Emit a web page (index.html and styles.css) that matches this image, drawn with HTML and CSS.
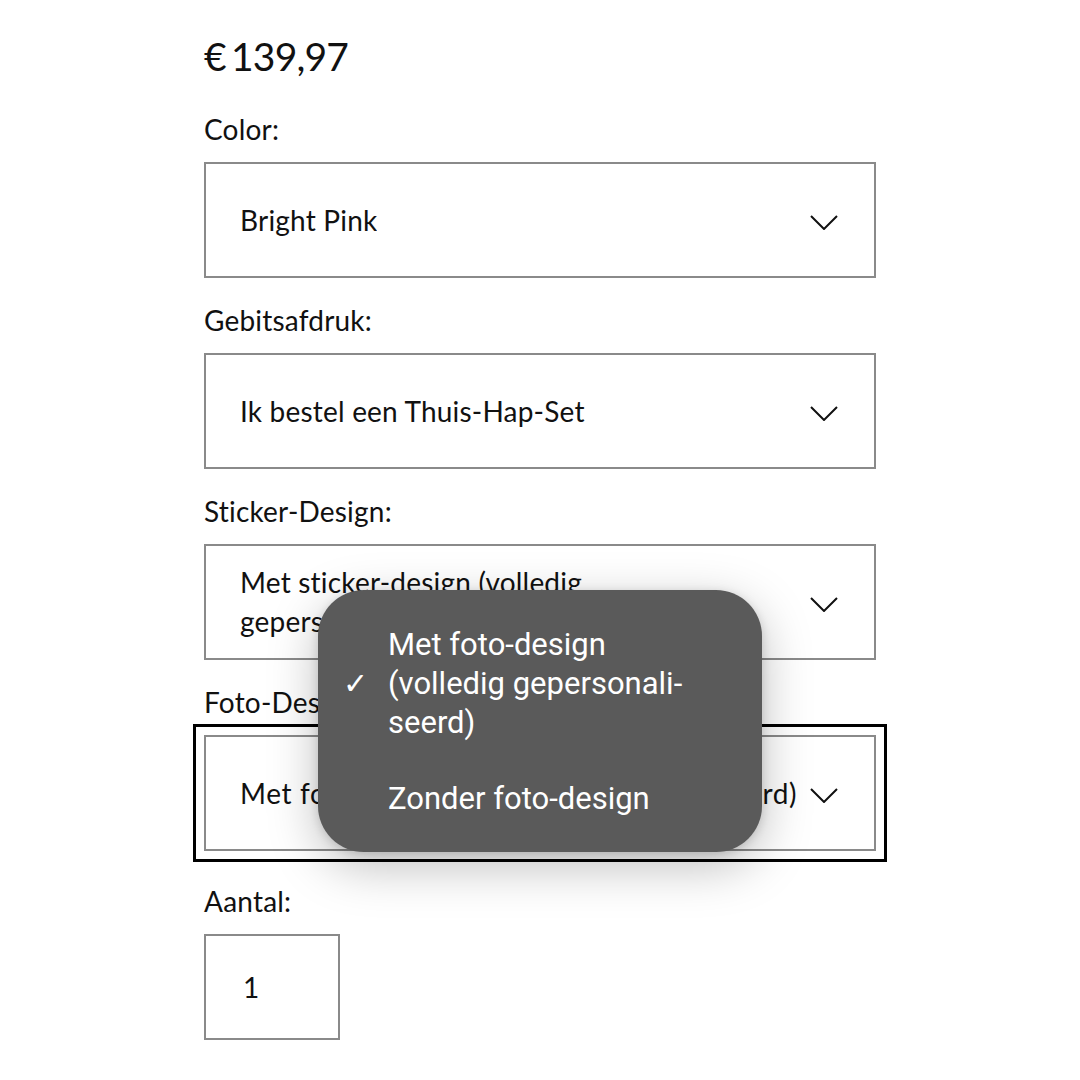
FILE: index.html
```
<!DOCTYPE html>
<html lang="nl">
<head>
<meta charset="utf-8">
<link rel="stylesheet" href="styles.css">
</head>
<body>
<main class="page">
  <div class="price">€ 139,97</div>

  <div class="field">
    <div class="label">Color:</div>
    <div class="select">
      <span class="value">Bright Pink</span>
      <svg class="chev" width="28" height="16" viewBox="0 0 28 16"><polyline points="1,2 14,15 27,2" fill="none" stroke="#111" stroke-width="2"/></svg>
    </div>
  </div>

  <div class="field">
    <div class="label">Gebitsafdruk:</div>
    <div class="select">
      <span class="value">Ik bestel een Thuis-Hap-Set</span>
      <svg class="chev" width="28" height="16" viewBox="0 0 28 16"><polyline points="1,2 14,15 27,2" fill="none" stroke="#111" stroke-width="2"/></svg>
    </div>
  </div>

  <div class="field">
    <div class="label">Sticker-Design:</div>
    <div class="select">
      <span class="value">Met sticker-design (volledig<br>gepersonaliseerd)</span>
      <svg class="chev" width="28" height="16" viewBox="0 0 28 16"><polyline points="1,2 14,15 27,2" fill="none" stroke="#111" stroke-width="2"/></svg>
    </div>
  </div>

  <div class="field">
    <div class="label">Foto-Design:</div>
    <div class="select focused">
      <span class="value nowrap">Met foto-design (volledig gepersonaliseerd)</span>
      <svg class="chev" width="28" height="16" viewBox="0 0 28 16"><polyline points="1,2 14,15 27,2" fill="none" stroke="#111" stroke-width="2"/></svg>
    </div>
  </div>

  <div class="field field-after-focus">
    <div class="label">Aantal:</div>
    <div class="qty">1</div>
  </div>

  <div class="menu">
    <div class="option">
      <span class="check">✓</span>
      <span>Met foto-design<br>(volledig gepersonali-<br>seerd)</span>
    </div>
    <div class="option">
      <span class="check"></span>
      <span>Zonder foto-design</span>
    </div>
  </div>
</main>
</body>
</html>
```

FILE: styles.css
```
html, body {
  margin: 0;
  padding: 0;
  background: #fff;
}

.page {
  position: relative;
  width: 672px;
  padding: 32px 204px 0;
  font-family: "Lato", "Noto Sans", sans-serif;
  color: #111;
}

.price {
  font-size: 39px;
  line-height: 48px;
  letter-spacing: -0.8px;
  word-spacing: -4px;
  margin-bottom: 31px;
}

.field + .field {
  margin-top: 24px;
}

.field-after-focus.field {
  margin-top: 32px;
}

.label {
  font-size: 28px;
  line-height: 36px;
  letter-spacing: 0.2px;
  margin-bottom: 15px;
}

.select {
  box-sizing: border-box;
  height: 116px;
  border: 2px solid #8a8a8a;
  display: flex;
  align-items: center;
  justify-content: space-between;
  padding: 0 38px 0 34px;
  gap: 10px;
}

.value {
  font-size: 28px;
  line-height: 39px;
  letter-spacing: 0.2px;
  overflow: hidden;
}

.nowrap {
  white-space: nowrap;
  letter-spacing: 0.65px;
}

.chev {
  flex: none;
  margin-top: 3px;
  margin-right: -2px;
}

.focused {
  outline: 3px solid #000;
  outline-offset: 8px;
}

.qty {
  box-sizing: border-box;
  width: 136px;
  height: 106px;
  border: 2px solid #8a8a8a;
  display: flex;
  align-items: center;
  padding-left: 37px;
  font-size: 28px;
}

.menu {
  position: absolute;
  left: 318px;
  top: 590px;
  width: 444px;
  height: 262px;
  box-sizing: border-box;
  background: #5a5a5a;
  border-radius: 46px;
  box-shadow: 0 14px 50px rgba(0, 0, 0, 0.26), 0 2px 10px rgba(0, 0, 0, 0.15);
  padding: 35px 20px 0 24px;
  font-family: "Roboto", sans-serif;
  font-size: 31px;
  line-height: 39px;
  color: #fff;
  display: flex;
  flex-direction: column;
  gap: 37px;
}

.option {
  display: flex;
  align-items: center;
}

.check {
  width: 46px;
  flex: none;
  font-size: 30px;
  padding-left: 1px;
  box-sizing: border-box;
}
```
